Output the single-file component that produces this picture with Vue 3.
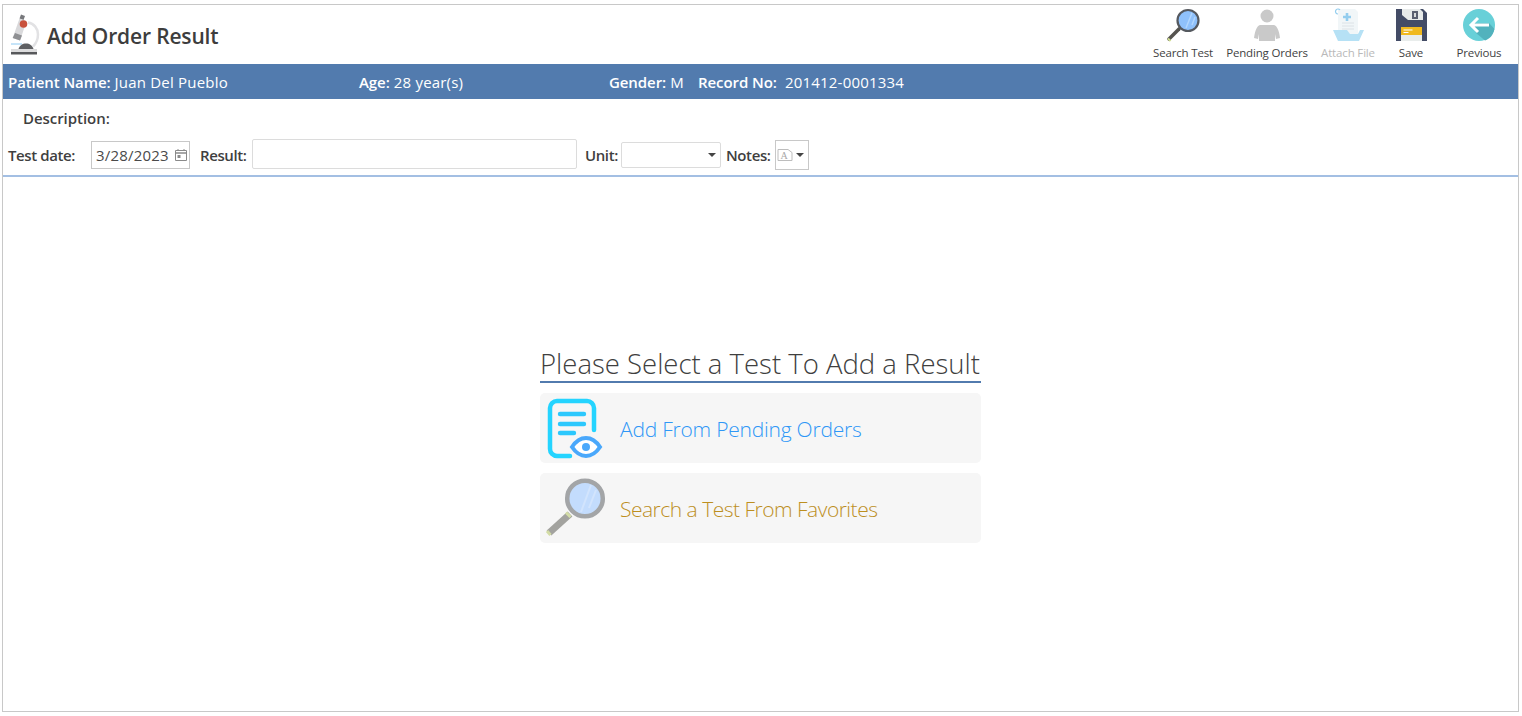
<template>
  <div class="frame">
    <header class="top">
      <div class="brand">
        <svg class="scope" viewBox="0 0 30 42" width="30" height="42">
          <path d="M18 9.500c6 1 10 6 10 12 0 5-2 9-5 12" fill="none" stroke="#e2e2e4" stroke-width="2.500"/>
          <path d="M11 1.500l4 1.500-1.500 4-4-1.500z" fill="#77787c"/>
          <path d="M9.500 5.500l7 3-6.500 19-7.300-2.500z" fill="#d9d9db"/>
          <path d="M5 20l7 2.500-2 5-7.300-2.500z" fill="#8f9093"/>
          <circle cx="13.500" cy="11" r="3.800" fill="#c9523d"/>
          <path d="M1 31h11" stroke="#8cc9f2" stroke-width="1"/>
          <path d="M8.500 36c1-3.500 4-5.500 7.500-5.500s6.500 2 7.500 5.500z" fill="#5e5f62"/>
          <path d="M1 36h26v3H1z" fill="#dcdcdd"/>
          <path d="M1 39h26v2.500H1z" fill="#57585b"/>
        </svg>
        <h1>Add Order Result</h1>
      </div>
      <nav class="tools">
        <button class="tool w-search">
          <svg viewBox="0 0 34 34" width="34" height="34">
            <path d="M13 21L3 31" stroke="#55534f" stroke-width="3.600" stroke-linecap="round"/>
            <path d="M2 30.500l2.500 2.500" stroke="#cfdc8e" stroke-width="2"/>
            <circle cx="22" cy="12.500" r="10.500" fill="#8fc1fb" stroke="#55595f" stroke-width="2.200"/>
            <path d="M26 5l-6 15M29 9l-3 8" stroke="#b2d6fd" stroke-width="1.500"/>
          </svg>
          <span>Search Test</span>
        </button>
        <button class="tool w-pending">
          <svg viewBox="0 0 34 34" width="34" height="34">
            <circle cx="17" cy="8" r="6.500" fill="#c9c9c9"/>
            <path d="M10 17h14c3 1 5 5 6 13l-4 1-1-5v7H9v-7l-1 5-4-1c1-8 3-12 6-13z" fill="#c9c9c9"/>
          </svg>
          <span>Pending Orders</span>
        </button>
        <button class="tool w-attach is-off">
          <svg viewBox="0 0 34 34" width="34" height="34">
            <path d="M7 1h17l3 3v22H7z" fill="#f1f6f8"/>
            <path d="M11 15h12M11 18h12M11 21h12" stroke="#dce2e6" stroke-width="1"/>
            <path d="M12 9h8M16 5v8" stroke="#93cdee" stroke-width="2.600"/>
            <path d="M7 6a2.500 2.500 0 1 1 2-4" fill="none" stroke="#93cdee" stroke-width="1.200"/>
            <path d="M2 22h14l3 4h8l2-4h4l-5 11H7z" fill="#b6e1f5"/>
          </svg>
          <span>Attach File</span>
        </button>
        <button class="tool w-save">
          <svg viewBox="0 0 34 34" width="34" height="34">
            <path d="M2 1h27l4 4v28H2z" fill="#434c66"/>
            <path d="M8 1h18l3 3v8H14l-6-5z" fill="#e8ebea"/>
            <path d="M18 3h6v8h-6z" fill="#5a6070"/>
            <path d="M20 5h2v4h-2z" fill="#d9dcdc"/>
            <path d="M7 19h21v14H7z" fill="#e9edec"/>
            <path d="M7 19h21v8H7z" fill="#f0b91e"/>
            <path d="M9.500 22h9M9.500 24.500h5" stroke="#fff" stroke-width="1.200"/>
          </svg>
          <span>Save</span>
        </button>
        <button class="tool w-prev">
          <svg viewBox="0 0 34 34" width="34" height="34">
            <circle cx="17" cy="17" r="16" fill="#68d0d8"/>
            <path d="M14 25l9 7.500c5-2 8-5 9.500-11.500L27 15H11z" fill="#52b2bd"/>
            <path d="M27 17H10M16 10l-7 7 7 7" fill="none" stroke="#fff" stroke-width="3"/>
          </svg>
          <span>Previous</span>
        </button>
      </nav>
    </header>

    <div class="patient">
      <div class="field f-name"><b>Patient Name:</b> Juan Del Pueblo</div>
      <div class="field f-age"><b>Age:</b> 28 year(s)</div>
      <div class="field f-gender"><b>Gender:</b> M</div>
      <div class="field"><b>Record No:</b>&nbsp; 201412-0001334</div>
    </div>

    <div class="form">
      <div class="description">Description:</div>
      <div class="inputs">
        <label class="lab l-date">Test date:</label>
        <div class="date">
          <span>3/28/2023</span>
          <svg viewBox="0 0 14 14" width="14" height="14">
            <path d="M1.500 2.500h11v10h-11z" fill="#fff" stroke="#8a8a8a"/>
            <path d="M1.500 5h11" stroke="#8a8a8a" stroke-width="1.500"/>
            <path d="M4 1v2M10 1v2" stroke="#8a8a8a"/>
            <path d="M3.500 7h3v3h-3z" fill="#8a8a8a"/>
          </svg>
        </div>
        <label class="lab l-result">Result:</label>
        <div class="result"></div>
        <label class="lab l-unit">Unit:</label>
        <div class="unit"><i class="caret"></i></div>
        <label class="lab l-notes">Notes:</label>
        <div class="notes">
          <svg viewBox="0 0 16 14" width="16" height="14">
            <path d="M1 1.500h10l4 3v8H1z" fill="#fff" stroke="#bdbdbd"/>
            <text x="3.500" y="10.500" class="note-a">A</text>
          </svg>
          <i class="caret"></i>
        </div>
      </div>
    </div>

    <main class="main">
      <div class="panel">
        <h2>Please Select a Test To Add a Result</h2>
        <button class="option blue">
          <svg viewBox="0 0 60 64" width="60" height="64">
            <path d="M26 60H13a7 7 0 0 1-7-7V12a7 7 0 0 1 7-7h30a7 7 0 0 1 7 7v22" fill="none" stroke="#24d4ff" stroke-width="4.500" stroke-linecap="round"/>
            <path d="M16 18h24M16 28h24M16 37h14" stroke="#2cc8fd" stroke-width="4.400" stroke-linecap="round"/>
            <path d="M28 51c4-6 9-9 14-9s10 3 14 9c-4 6-9 9-14 9s-10-3-14-9z" fill="#fff" stroke="#4aa8fb" stroke-width="4"/>
            <circle cx="42" cy="51" r="4" fill="#4aa8fb"/>
          </svg>
          <span>Add From Pending Orders</span>
        </button>
        <button class="option gold">
          <svg viewBox="0 0 60 64" width="60" height="64">
            <path d="M26 38L5 57" stroke="#a3a39f" stroke-width="7"/>
            <path d="M22 36.500l4.500 4.500M3 55l3.500 4" stroke="#d3dca6" stroke-width="3"/>
            <circle cx="41" cy="22.500" r="17.800" fill="#c3dcfd" stroke="#a3a5a7" stroke-width="4.500"/>
            <path d="M47 9L37 36M52 14l-7 18" stroke="#d2e4fd" stroke-width="2"/>
          </svg>
          <span>Search a Test From Favorites</span>
        </button>
      </div>
    </main>
  </div>
</template>

<script setup>
</script>

<style>
html, body { margin: 0; background: #fff; }
</style>

<style scoped>
.frame {
  box-sizing: border-box;
  width: 1517px;
  height: 708px;
  margin: 4px 0 0 2px;
  border: 1px solid #c8c8c8;
  display: flex;
  flex-direction: column;
  font-family: "Open Sans", "Noto Sans", sans-serif;
  color: #3f3f3f;
  background: #fff;
}
.top {
  height: 59px;
  display: flex;
  justify-content: space-between;
  align-items: flex-start;
}
.brand {
  display: flex;
  align-items: center;
  gap: 7px;
  padding: 8px 0 0 7px;
}
.scope { display: block; }
h1 {
  margin: 4px 0 0;
  font-size: 21px;
  font-weight: 600;
  letter-spacing: -0.16px;
  color: #3d3d3d;
}
.tools { display: flex; }
.tool {
  border: 0;
  padding: 3px 0 0;
  background: none;
  font: inherit;
  font-size: 11.5px;
  letter-spacing: -0.16px;
  color: #3f3f3f;
  display: flex;
  flex-direction: column;
  align-items: center;
  gap: 3px;
  white-space: nowrap;
}
.tool svg { display: block; }
.is-off { color: #b9b9b9; }
.w-search { width: 84px; }
.w-pending { width: 84px; }
.w-attach { width: 78px; }
.w-save { width: 48px; }
.w-prev { width: 78px; margin-left: 5px; }
.patient {
  height: 35px;
  box-sizing: border-box;
  padding: 1px 0 0 5px;
  background: #527bae;
  color: #fff;
  display: flex;
  align-items: center;
  font-size: 15px;
  letter-spacing: 0.2px;
  white-space: nowrap;
}
.patient b { font-weight: 600; letter-spacing: -0.08px; }
.f-name { width: 351px; }
.f-age { width: 250px; }
.f-gender { width: 89px; }
.form {
  height: 78px;
  box-sizing: border-box;
  border-bottom: 2px solid #a3bfe3;
  font-size: 15px;
  letter-spacing: -0.05px;
}
.description {
  padding: 9px 0 0 20px;
  height: 30px;
  box-sizing: border-box;
  font-weight: 600;
}
.inputs {
  display: flex;
  align-items: center;
  margin-top: 11px;
  height: 30px;
}
.lab { font-weight: 600; white-space: nowrap; letter-spacing: -0.4px; }
.l-date { margin-left: 5px; width: 83px; }
.l-result { margin-left: 10px; width: 52px; }
.l-unit { margin-left: 8px; width: 36px; }
.l-notes { margin-left: 5px; width: 49px; }
.date {
  box-sizing: border-box;
  width: 99px;
  height: 28px;
  border: 1px solid #c8c8c8;
  display: flex;
  align-items: center;
  justify-content: space-between;
  padding: 0 1px 0 4px;
  color: #4a4a4a;
  letter-spacing: 0.2px;
  white-space: nowrap;
}
.result {
  box-sizing: border-box;
  width: 325px;
  height: 30px;
  margin-bottom: 2px;
  border: 1px solid #dcdcdc;
  border-radius: 2px;
}
.unit {
  box-sizing: border-box;
  width: 100px;
  height: 26px;
  border: 1px solid #dcdcdc;
  border-radius: 2px;
  display: flex;
  align-items: center;
  justify-content: flex-end;
  padding-right: 4px;
}
.notes {
  box-sizing: border-box;
  width: 34px;
  height: 30px;
  border: 1px solid #c8c8c8;
  display: flex;
  align-items: center;
  gap: 3px;
  padding-left: 1px;
}
.note-a { font-size: 10px; fill: #a8a8a8; font-family: "Liberation Serif", serif; }
.caret {
  width: 0;
  height: 0;
  border-left: 4px solid transparent;
  border-right: 4px solid transparent;
  border-top: 4px solid #444;
}
.main {
  flex: 1;
  display: flex;
  justify-content: center;
  align-items: flex-start;
  padding-top: 168px;
}
.panel { width: 441px; }
h2 {
  margin: 0;
  height: 38px;
  box-sizing: border-box;
  border-bottom: 2px solid #527bae;
  font-size: 27.5px;
  line-height: 38px;
  font-weight: 300;
  color: #3f3f3f;
  white-space: nowrap;
}
.option {
  width: 100%;
  height: 70px;
  margin-top: 10px;
  border: 0;
  border-radius: 5px;
  background: #f6f6f6;
  display: flex;
  align-items: center;
  gap: 16px;
  padding: 0 0 0 4px;
  font: inherit;
  font-size: 21px;
  font-weight: 300;
  white-space: nowrap;
}
.option svg { overflow: visible; }
.option span { padding-top: 2px; }
.blue { color: #2f97f6; letter-spacing: -0.22px; }
.gold { color: #bd8f1f; letter-spacing: -0.5px; }
</style>
